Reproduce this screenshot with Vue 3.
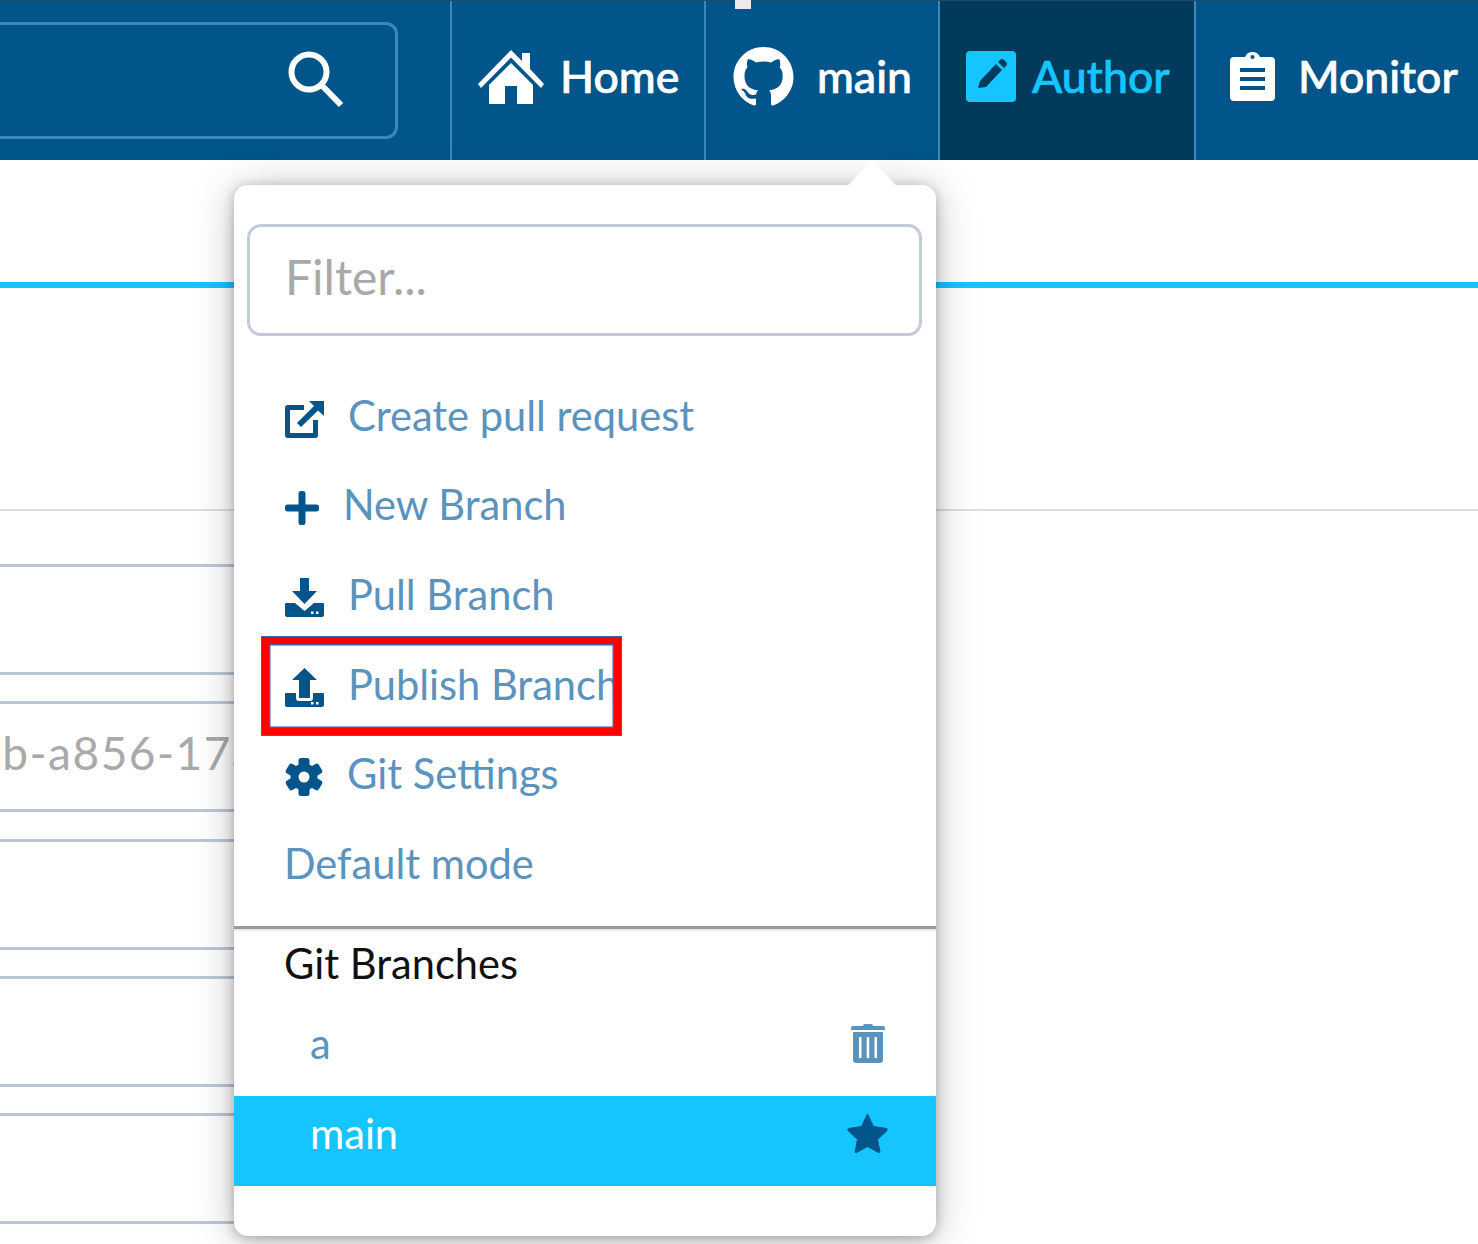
<script setup>
const menuItems = [
	{ label: 'Create pull request', icon: 'external' },
	{ label: 'New Branch', icon: 'plus' },
	{ label: 'Pull Branch', icon: 'pull' },
	{ label: 'Publish Branch', icon: 'publish' },
	{ label: 'Git Settings', icon: 'gear' },
	{ label: 'Default mode', icon: null }
];

const fieldRows = ['', 'db-a856-17a9c', '', '', ''];
const gearTeeth = [0, 60, 120, 180, 240, 300];
</script>

<template>
	<div class="page">
		<header class="topbar">
			<span class="topbar__marker"></span>
			<div class="search">
				<svg class="search__icon" viewBox="0 0 58 58" fill="none" stroke="#fff">
					<circle cx="22" cy="22" r="17.5" stroke-width="6" />
					<path d="M34.5 35 L54 55" stroke-width="6" />
				</svg>
			</div>
			<nav class="nav">
				<a class="nav__item nav__item--home">
					<svg class="nav__icon nav__icon--home" viewBox="0 0 66 54" fill="#fff">
						<path d="M33 0 L44 11 V3 H52 V19 L66 34 L63 38 L33 7.500 L3 38 L0 34 Z" />
						<path d="M33 13 L55 35 V54 H39 V36 H27 V54 H11 V35 Z" />
					</svg>
					<span>Home</span>
				</a>
				<a class="nav__item nav__item--branch">
					<svg class="nav__icon nav__icon--github" viewBox="0 0 16 16" fill="#fff">
						<path d="M8 0C3.58 0 0 3.58 0 8c0 3.54 2.290 6.530 5.470 7.590.4.070.550-.170.550-.380 0-.190-.010-.820-.010-1.490-2.010.370-2.530-.490-2.690-.940-.090-.230-.480-.940-.820-1.130-.280-.150-.680-.520-.010-.530.630-.010 1.080.580 1.230.820.720 1.210 1.870.870 2.330.660.070-.520.280-.870.510-1.070-1.780-.2-3.640-.890-3.640-3.950 0-.870.310-1.590.820-2.150-.080-.2-.360-1.020.080-2.120 0 0 .670-.210 2.200.820.640-.180 1.320-.270 2-.270.680 0 1.360.090 2 .270 1.530-1.040 2.200-.820 2.200-.820.440 1.100.160 1.920.080 2.120.510.560.820 1.270.820 2.150 0 3.070-1.870 3.750-3.650 3.950.290.250.540.730.540 1.480 0 1.070-.010 1.930-.010 2.200 0 .210.150.460.550.380A8.013 8.013 0 0016 8c0-4.420-3.580-8-8-8z" />
					</svg>
					<span>main</span>
				</a>
				<a class="nav__item nav__item--author">
					<svg class="nav__icon nav__icon--author" viewBox="0 0 50 51">
						<rect width="50" height="51" rx="4" fill="#15c5ff" />
						<path d="M12 37 L14 30 L30 13 L36 19 L20 36 Z M32 11 L34.500 8.500 Q36 7.500 37.500 8.500 L40.500 11.500 Q41.500 13 40.500 14.500 L38 17 Z" fill="#023a5c" />
					</svg>
					<span>Author</span>
				</a>
				<a class="nav__item nav__item--monitor">
					<svg class="nav__icon nav__icon--monitor" viewBox="0 0 45 49">
						<path d="M4 5 H15 Q17 0 22.500 0 Q28 0 30 5 H41 Q45 5 45 9 V45 Q45 49 41 49 H4 Q0 49 0 45 V9 Q0 5 4 5 Z" fill="#fff" />
						<circle cx="22.500" cy="5" r="2" fill="#02558a" />
						<rect x="10" y="16" width="25" height="4" fill="#02558a" />
						<rect x="10" y="25" width="25" height="4" fill="#02558a" />
						<rect x="10" y="34" width="25" height="4" fill="#02558a" />
					</svg>
					<span>Monitor</span>
				</a>
			</nav>
		</header>

		<main class="content">
			<div class="content__tabs"></div>
			<div class="content__toolbar"></div>
			<div class="fields">
				<div v-for="(value, i) in fieldRows" :key="i" class="field">
					<span class="field__value">{{ value }}</span>
				</div>
			</div>
		</main>

		<div class="popover">
			<span class="popover__arrow"></span>
			<div class="popover__filter">
				<input class="popover__input" placeholder="Filter..." />
			</div>

			<ul class="menu">
				<li v-for="item in menuItems" :key="item.label" class="menu__item">
					<svg v-if="item.icon === 'external'" class="menu__icon menu__icon--external" viewBox="0 0 39 39">
						<path d="M0 9 Q0 6 3 6 H19 V11 H5 V34 H28 V21 H33 V36 Q33 39 30 39 H3 Q0 39 0 36 Z" fill="#02558a" />
						<path d="M12 24 L29 7 L24 2 H39 V17 L33 11.500 L16 28 Z" fill="#02558a" />
					</svg>
					<svg v-else-if="item.icon === 'plus'" class="menu__icon menu__icon--plus" viewBox="0 0 34 34">
						<rect x="0" y="13.500" width="34" height="7" rx="2.500" fill="#02558a" />
						<rect x="13.500" y="0" width="7" height="34" rx="2.500" fill="#02558a" />
					</svg>
					<svg v-else-if="item.icon === 'pull'" class="menu__icon menu__icon--tray" viewBox="0 0 39 39">
						<path d="M15 0 H24 V13 H32 L19.500 26 L7 13 H15 Z" fill="#02558a" />
						<path d="M1 25 H10 L19.500 33 L29 25 H38 Q39 25 39 26 V37 Q39 39 37 39 H2 Q0 39 0 37 V26 Q0 25 1 25 Z" fill="#02558a" />
						<rect x="26" y="33.500" width="2.500" height="2.500" fill="#fff" />
						<rect x="31" y="33.500" width="2.500" height="2.500" fill="#fff" />
					</svg>
					<svg v-else-if="item.icon === 'publish'" class="menu__icon menu__icon--tray" viewBox="0 0 39 39">
						<path d="M19.500 0 L32 12 H25 V30 H14 V12 H7 Z" fill="#02558a" />
						<path d="M1 25 H11 V30 Q11 33 14 33 H25 Q28 33 28 30 V25 H38 Q39 25 39 26 V37 Q39 39 37 39 H2 Q0 39 0 37 V26 Q0 25 1 25 Z" fill="#02558a" />
						<rect x="26" y="34" width="2.500" height="2.500" fill="#fff" />
						<rect x="31" y="34" width="2.500" height="2.500" fill="#fff" />
					</svg>
					<svg v-else-if="item.icon === 'gear'" class="menu__icon menu__icon--gear" viewBox="0 0 38 38">
						<g fill="#02558a">
							<rect v-for="deg in gearTeeth" :key="deg" x="13.500" y="0" width="11" height="12" rx="2.500" :transform="`rotate(${deg} 19 19)`" />
						</g>
						<circle cx="19" cy="19" r="9.500" fill="none" stroke="#02558a" stroke-width="8" />
					</svg>
					<span>{{ item.label }}</span>
				</li>
			</ul>

			<div class="branches">
				<h4 class="branches__title">Git Branches</h4>
				<div class="branch">
					<span>a</span>
					<svg class="branch__trash" viewBox="0 0 34 39">
						<path d="M12 2 Q12 0 14 0 H20 Q22 0 22 2 H32 Q34 2 34 4 V6 H0 V4 Q0 2 2 2 Z" fill="#5a93bd" />
						<path d="M2 8 H32 V36 Q32 39 29 39 H5 Q2 39 2 36 Z" fill="#5a93bd" />
						<rect x="8" y="13" width="2.500" height="21" fill="#fff" />
						<rect x="15.700" y="13" width="2.500" height="21" fill="#fff" />
						<rect x="23.500" y="13" width="2.500" height="21" fill="#fff" />
					</svg>
				</div>
				<div class="branch branch--current">
					<span>main</span>
					<svg class="branch__star" viewBox="0 0 41 40">
						<path d="M20.500 1 L26.500 13.500 L39.500 15.500 Q41 16 40 17.500 L30.500 26.500 L33 39 Q32.800 40 31.500 39.500 L20.500 33.500 L9.500 39.500 Q8.200 40 8 39 L10.500 26.500 L1 17.500 Q0 16 1.500 15.500 L14.500 13.500 Z" fill="#02558a" stroke="#02558a" stroke-linejoin="round" />
					</svg>
				</div>
			</div>
		</div>

		<div class="callout"></div>
	</div>
</template>

<style>
html,
body {
	margin: 0;
	overflow: hidden;
	background: #fff;
}
</style>

<style scoped>
.page {
	position: relative;
	height: 1244px;
	overflow: hidden;
	font-family: Lato, "Open Sans", sans-serif;
	background: #fff;
}

.topbar {
	position: relative;
	display: flex;
	justify-content: space-between;
	align-items: stretch;
	height: 160px;
	box-sizing: border-box;
	background: #02558a;
	border-top: 1px solid #1c4a6b;
}

.topbar__marker {
	position: absolute;
	top: -1px;
	left: 735px;
	width: 16px;
	height: 9px;
	background: #ececec;
}

.search {
	display: flex;
	align-items: center;
	justify-content: flex-end;
	box-sizing: border-box;
	width: 398px;
	height: 117px;
	margin: 21px 0 0 0;
	padding-right: 50px;
	border: 3px solid #3d88bb;
	border-left: none;
	border-radius: 0 12px 12px 0;
}

.search__icon {
	width: 58px;
	height: 58px;
	margin-top: -4px;
}

.nav {
	display: flex;
	height: 100%;
}

.nav__item {
	display: flex;
	align-items: center;
	box-sizing: border-box;
	padding-bottom: 11px;
	border-left: 2px solid #3d88bb;
	color: #fff;
	font-size: 44.6px;
	font-weight: 500;
	-webkit-text-stroke: 0.7px currentColor;
}

.nav__icon {
	margin-top: 3px;
}

.nav__item--home {
	width: 254px;
	padding-left: 26px;
	gap: 16px;
}

.nav__item--branch {
	width: 234px;
	padding-left: 26px;
	gap: 22px;
}

.nav__item--author {
	width: 256px;
	padding-left: 26px;
	gap: 16px;
	color: #15c5ff;
	background: #023a5c;
}

.nav__item--monitor {
	width: 284px;
	padding-left: 34px;
	gap: 23px;
}

.nav__icon--home {
	width: 66px;
	height: 54px;
}

.nav__icon--github {
	width: 63px;
	height: 60px;
}

.nav__icon--author {
	width: 50px;
	height: 51px;
}

.nav__icon--monitor {
	width: 45px;
	height: 49px;
}

.content__tabs {
	height: 122px;
	border-bottom: 6px solid #15c5ff;
	box-sizing: content-box;
}

.content__toolbar {
	height: 221px;
	border-bottom: 2px solid #dedede;
}

.fields {
	display: flex;
	flex-direction: column;
	gap: 26.3px;
	width: 600px;
	margin-top: 53px;
}

.field {
	display: flex;
	align-items: center;
	box-sizing: border-box;
	height: 111px;
	padding-bottom: 8px;
	border-top: 3px solid #bcc6d6;
	border-bottom: 3px solid #bcc6d6;
}

.field__value {
	margin-left: -25px;
	font-size: 46px;
	letter-spacing: 1.5px;
	white-space: nowrap;
	color: #a9a9a9;
}

.popover {
	position: absolute;
	top: 185px;
	left: 234px;
	width: 702px;
	height: 1051px;
	background: #fff;
	border-radius: 14px;
	box-shadow: 0 4px 40px rgba(0, 0, 0, 0.25), 0 2px 12px rgba(0, 0, 0, 0.25);
}

.popover__arrow {
	position: absolute;
	top: -25px;
	left: 614px;
	width: 0;
	height: 0;
	border-left: 24px solid transparent;
	border-right: 24px solid transparent;
	border-bottom: 25px solid #fff;
}

.popover__filter {
	padding: 39px 14px 0 13px;
}

.popover__input {
	display: block;
	box-sizing: border-box;
	width: 100%;
	height: 112px;
	padding: 0 35px 8px;
	border: 3px solid #c3cbd8;
	border-radius: 14px;
	outline: none;
	background: #fff;
	font-family: inherit;
	font-size: 48px;
}

.popover__input::placeholder {
	color: #a9a9a9;
	opacity: 1;
}

.menu {
	margin: 0;
	padding: 36px 0 0 50px;
	list-style: none;
}

.menu__item {
	display: flex;
	align-items: center;
	box-sizing: border-box;
	height: 89.6px;
	padding-bottom: 4px;
	gap: 24px;
	font-size: 41.6px;
	white-space: nowrap;
	color: #5a93bd;
}

.menu__icon {
	flex-shrink: 0;
	width: 39px;
	height: 39px;
	margin: 8px 0 0 1px;
}

.menu__icon--plus {
	width: 34px;
	height: 34px;
}

.menu__icon--gear {
	width: 38px;
	height: 38px;
}

.branches {
	margin-top: 16px;
	border-top: 3px solid #9a9a9a;
	box-shadow: inset 0 3px 3px -1px rgba(0, 0, 0, 0.1);
}

.branches__title {
	margin: 0;
	padding: 9px 0 19px 50px;
	font-size: 41.6px;
	font-weight: 400;
	line-height: 50px;
	color: #111;
}

.branch {
	display: flex;
	align-items: center;
	justify-content: space-between;
	box-sizing: border-box;
	height: 89.5px;
	padding: 0 48px 16px 76px;
	font-size: 41.6px;
	color: #5a93bd;
}

.branch--current {
	color: #fff;
	background: #15c5ff;
}

.branch__trash {
	width: 34px;
	height: 39px;
	margin-right: 3px;
}

.branch__star {
	width: 41px;
	height: 40px;
}

.callout {
	position: absolute;
	top: 636px;
	left: 261px;
	width: 361px;
	height: 100px;
	box-sizing: border-box;
	border: 8px solid #f00;
	outline: 1.5px solid #3a63a8;
	outline-offset: -1.5px;
	box-shadow: inset 0 0 0 1.5px #3a63a8;
}
</style>
